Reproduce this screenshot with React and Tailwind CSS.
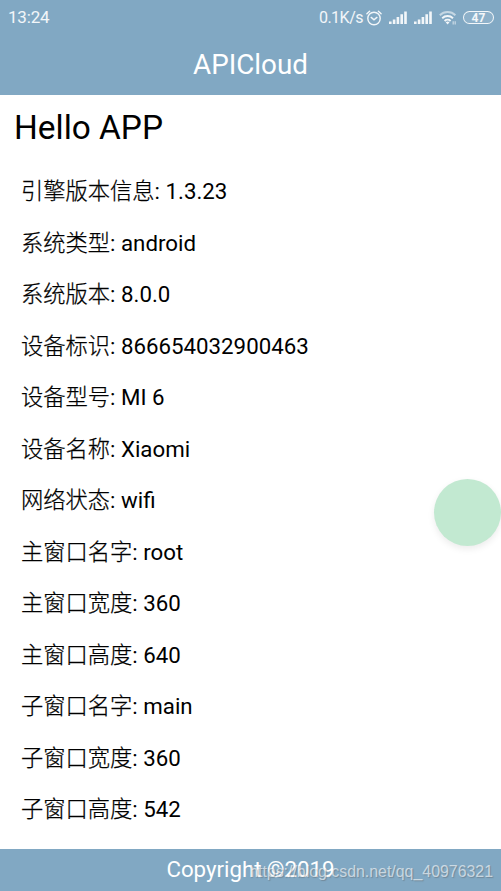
const INFO = [
  { label: '引擎版本信息', value: '1.3.23' },
  { label: '系统类型', value: 'android' },
  { label: '系统版本', value: '8.0.0' },
  { label: '设备标识', value: '866654032900463' },
  { label: '设备型号', value: 'MI 6' },
  { label: '设备名称', value: 'Xiaomi' },
  { label: '网络状态', value: 'wifi' },
  { label: '主窗口名字', value: 'root' },
  { label: '主窗口宽度', value: '360' },
  { label: '主窗口高度', value: '640' },
  { label: '子窗口名字', value: 'main' },
  { label: '子窗口宽度', value: '360' },
  { label: '子窗口高度', value: '542' },
]

function AlarmIcon() {
  return (
    <svg viewBox="0 0 16 16" className="w-4 h-4" fill="none" stroke="currentColor" strokeWidth="1.4" strokeLinecap="round">
      <circle cx="8" cy="8.5" r="6.2" />
      <path d="M.9 3.8 3.6 1.2M15.1 3.8 12.4 1.2M5.2 7.4 8 9.8l2.9-2.4" />
    </svg>
  )
}

function SignalIcon() {
  return (
    <svg viewBox="0 0 18 14" className="w-[18px] h-3.5" fill="currentColor">
      <path d="M0 10.5h2.6V13H0zM3.8 8.5h2.6V13H3.8zM7.6 6h2.6v7H7.6zM11.4 3.3H14V13h-2.6zM15.2 .5h2.6V13h-2.6z" />
    </svg>
  )
}

function WifiIcon() {
  return (
    <svg viewBox="0 0 18 15" className="w-[18px] h-[15px]" fill="none" stroke="currentColor" strokeWidth="1.9">
      <path d="M.8 5.2c4.4-4.3 11.2-4.3 15.6 0" opacity=".6" />
      <path d="M3.2 8.2c3-2.9 7.8-2.9 10.8 0M5.6 11c1.7-1.6 4.3-1.6 6 0" />
      <path d="M6.7 12.3c1.2-1 2.6-1 3.8 0l-1.9 2.2z" fill="currentColor" stroke="none" />
      <path d="M14.2 11.2v3.2M16.2 11.2v3.2" strokeWidth="1.3" opacity=".6" />
    </svg>
  )
}

function StatusBar() {
  return (
    <div className="h-[35px] pl-2 pr-[7px] flex items-center justify-between text-white/90">
      <span className="pt-px text-[17px] tracking-[-0.2px]">13:24</span>
      <div className="flex items-center">
        <span className="mr-[3px] text-[16px] tracking-[-0.5px]">0.1K/s</span>
        <AlarmIcon />
        <span className="ml-[7px]"><SignalIcon /></span>
        <span className="ml-[7px]"><SignalIcon /></span>
        <span className="ml-[7px]"><WifiIcon /></span>
        <span className="ml-[6px] w-[31px] h-[13px] rounded-full border-[1.5px] border-white/90 bg-white/10 flex items-center justify-center text-[12px] leading-none font-bold">47</span>
      </div>
    </div>
  )
}

export default function App() {
  return (
    <div className="relative w-[501px] h-[891px] flex flex-col overflow-hidden bg-white text-black font-[Roboto,'Noto_Sans_CJK_SC',sans-serif]">
      <header className="h-[95px] shrink-0 bg-[#81a8c3] text-white">
        <StatusBar />
        <h1 className="h-[60px] text-center text-[27.8px] leading-[60px]">APICloud</h1>
      </header>

      <main className="flex-1">
        <h2 className="h-[71px] pl-[14px] text-[33.4px] leading-[66px]">Hello APP</h2>
        <ul className="pl-[21px]">
          {INFO.map(({ label, value }) => (
            <li key={label} className="h-[51.5px] text-[22.27px] leading-[51.5px]">
              <span className="font-light [-webkit-text-stroke:0.25px_black]">{label}</span>: {value}
            </li>
          ))}
        </ul>
      </main>

      <footer className="h-[42px] shrink-0 bg-[#81a8c3] text-center text-[22.27px] leading-[40px] text-white">
        Copyright ©2019
      </footer>

      {/* floating assistive button */}
      <div className="absolute left-[434px] top-[479px] w-[67px] h-[67px] rounded-full bg-[#c2e9d1] shadow-[0_3px_7px_rgba(0,0,0,0.08)]" />
      <span className="absolute right-2 bottom-[9px] text-[15.9px] leading-5 text-white/60 [text-shadow:1px_1px_1px_rgba(90,90,90,0.4)] font-['Liberation_Sans',sans-serif]">
        https://blog.csdn.net/qq_40976321
      </span>
    </div>
  )
}
